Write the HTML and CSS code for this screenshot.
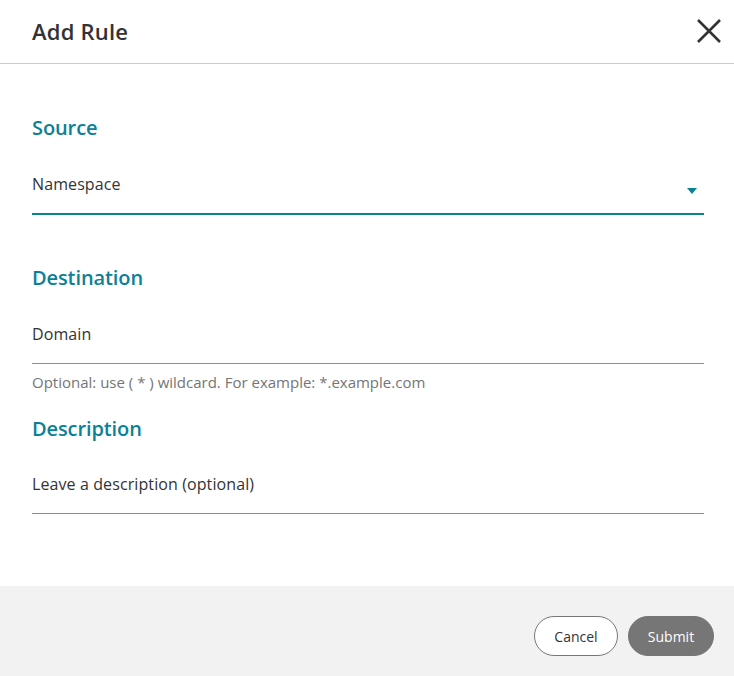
FILE: index.html
```html
<!DOCTYPE html>
<html lang="en">
<head>
<meta charset="utf-8">
<title>Add Rule</title>
<link rel="stylesheet" href="styles.css">
</head>
<body>
<div class="dialog">
  <header class="dialog-header">
    <h1 class="dialog-title">Add Rule</h1>
    <button class="close-btn" aria-label="Close">
      <svg width="24" height="24" viewBox="0 0 24 24"><path d="M1 1 L23 23 M23 1 L1 23" stroke="#333" stroke-width="2.6" fill="none"/></svg>
    </button>
  </header>
  <main class="dialog-body">
    <section class="section">
      <h2 class="section-title">Source</h2>
      <div class="field field-select">
        <span class="field-text">Namespace</span>
        <svg class="caret" width="10" height="6" viewBox="0 0 10 6"><path d="M0 0 H10 L5 6 Z" fill="#0b8196"/></svg>
      </div>
      <div class="helper helper-empty"></div>
    </section>
    <section class="section">
      <h2 class="section-title">Destination</h2>
      <div class="field">
        <span class="field-text">Domain</span>
      </div>
      <div class="helper">Optional: use ( * ) wildcard. For example: *.example.com</div>
    </section>
    <section class="section section-last">
      <h2 class="section-title">Description</h2>
      <div class="field">
        <span class="field-text">Leave a description (optional)</span>
      </div>
    </section>
  </main>
  <footer class="dialog-footer">
    <button class="btn btn-cancel">Cancel</button>
    <button class="btn btn-submit">Submit</button>
  </footer>
</div>
</body>
</html>
```

FILE: styles.css
```css
* { box-sizing: border-box; }
html, body { margin: 0; padding: 0; background: #fff; }
body { font-family: "Open Sans", "Noto Sans", sans-serif; color: #333; }
.dialog { width: 734px; height: 676px; display: flex; flex-direction: column; }
.dialog-header {
  height: 64px;
  border-bottom: 1px solid #cccccc;
  display: flex;
  align-items: center;
  justify-content: space-between;
  padding: 0 13px 0 32px;
}
.dialog-title { margin: 0; font-size: 22px; font-weight: 600; color: #333; line-height: 30px; letter-spacing: 0.2px; padding-bottom: 2px; }
.close-btn { border: 0; background: none; padding: 0; width: 24px; height: 24px; display: flex; cursor: pointer; margin-bottom: 2px; }
.dialog-body { flex: 1; padding: 50px 30px 0 32px; }
.section { margin-bottom: 21px; }
.section-title { margin: 0; font-size: 20px; font-weight: 600; color: #0b8196; line-height: 28px; letter-spacing: -0.1px; }
.field {
  margin-top: 30px;
  padding-bottom: 17px;
  border-bottom: 1px solid #8c8c8c;
  display: flex;
  align-items: center;
  justify-content: space-between;
  height: 42px;
}
.section-last .field { margin-top: 29px; }
.field-select { border-bottom: 2px solid #0b8196; height: 43px; }
.field-text { font-size: 16px; line-height: 24px; color: #333; letter-spacing: 0.1px; }
.caret { margin-right: 7px; margin-top: 14px; }
.helper { margin-top: 8px; height: 22px; font-size: 15px; line-height: 21px; color: #757575; }
.helper-empty { height: 20px; }
.dialog-footer {
  height: 90px;
  background: #f2f2f2;
  display: flex;
  justify-content: flex-end;
  align-items: flex-start;
  gap: 10px;
  padding: 30px 20px 0 0;
}
.btn {
  height: 40px;
  border-radius: 20px;
  font-family: "Open Sans", "Noto Sans", sans-serif;
  font-size: 14px;
  padding: 0 16px;
  cursor: pointer;
}
.btn-cancel { width: 84px; background: #fff; border: 1px solid #767676; color: #333; }
.btn-submit { width: 86px; background: #767676; border: 1px solid #767676; color: #fff; }
```
